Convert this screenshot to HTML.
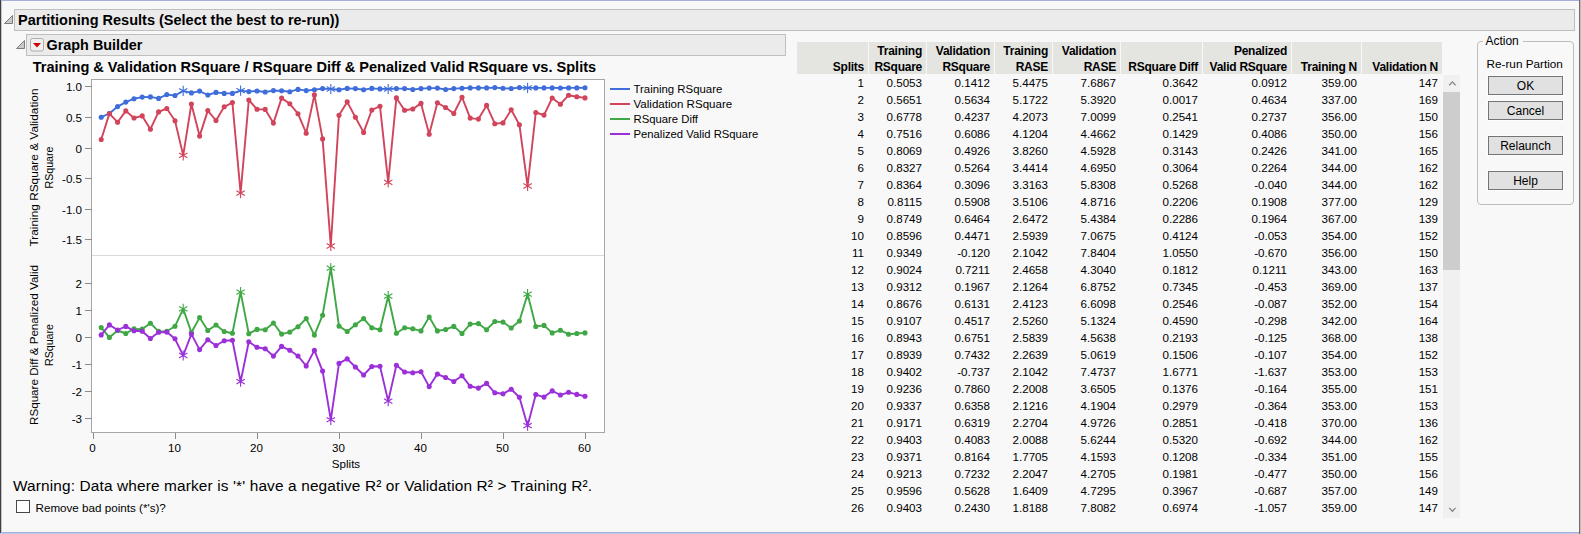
<!DOCTYPE html>
<html>
<head>
<meta charset="utf-8">
<title>Partitioning Results</title>
<style>
html,body{margin:0;padding:0;}
body{width:1581px;height:534px;overflow:hidden;position:relative;background:#f8f8f8;font-family:"Liberation Sans",sans-serif;color:#000;font-size:12px;}
.abs{position:absolute;}
.edge-top{left:0;top:0;width:1579px;height:1px;background:#a6afdb;}
.edge-left{left:0;top:0;width:1px;height:534px;background:#3c4046;}
.edge-left2{left:1px;top:0;width:1px;height:534px;background:#c6c6c6;}
.edge-right{left:1579px;top:0;width:1px;height:534px;background:#6c6c6c;}
.edge-right2{left:1580px;top:0;width:1px;height:534px;background:#bebebe;}
.edge-bottom{left:0;top:532px;width:1579px;height:1px;background:#a6aedb;}
.edge-bottom2{left:0;top:533px;width:1579px;height:1px;background:#c3c8e8;}
.hbox{position:absolute;background:#ebebeb;border:1px solid #bfbfbf;box-sizing:border-box;}
.htxt{position:absolute;font-weight:bold;white-space:nowrap;}
.tk{font-family:"Liberation Sans",sans-serif;font-size:11.6px;fill:#000;}
.th{position:absolute;top:42px;height:32px;background:#e4e4e0;box-sizing:border-box;font-weight:bold;font-size:12px;text-align:right;padding-right:4px;white-space:nowrap;}
.th span{display:block;height:16px;line-height:19px;letter-spacing:-0.25px;}
.td{position:absolute;height:17px;line-height:17px;text-align:right;box-sizing:border-box;padding-right:4px;font-size:11.6px;white-space:nowrap;}
.btn{position:absolute;left:1488px;width:75px;height:19px;box-sizing:border-box;background:#e1e1e1;border:1px solid #747474;box-shadow:0 0 0 1px #fdfdfd;text-align:center;line-height:19px;font-size:12px;}
</style>
</head>
<body>
<div class="abs edge-top"></div>
<div class="abs edge-bottom"></div>
<div class="abs edge-left"></div>
<div class="abs edge-left2"></div>
<div class="abs edge-bottom2"></div>
<div class="abs edge-right"></div>
<div class="abs edge-right2"></div>

<!-- outline header 1 -->
<div class="hbox" style="left:14px;top:9px;width:1561px;height:22px;"></div>
<svg class="abs" style="left:3px;top:13px" width="12" height="12" viewBox="0 0 12 12"><path d="M9.5 2.5V10.5H1.5Z" fill="#c8c8c8" stroke="#7c7c7c" stroke-width="1"/></svg>
<div class="htxt" id="t1" style="left:18px;top:12px;font-size:14.5px;line-height:17px;">Partitioning Results (Select the best to re-run))</div>

<!-- outline header 2 -->
<div class="hbox" style="left:26px;top:34px;width:760px;height:22px;"></div>
<svg class="abs" style="left:15px;top:38px" width="12" height="12" viewBox="0 0 12 12"><path d="M9.5 2.5V10.5H1.5Z" fill="#c8c8c8" stroke="#7c7c7c" stroke-width="1"/></svg>
<svg class="abs" style="left:30px;top:38px" width="14" height="14" viewBox="0 0 14 14"><rect x="0.5" y="0.5" width="13" height="12.5" rx="2" fill="#f0f0f0" stroke="#adadad"/><path d="M3 5H11L7 9.4Z" fill="#cc0000"/></svg>
<div class="htxt" id="t2" style="left:46.5px;top:37px;font-size:14.4px;line-height:17px;">Graph Builder</div>

<div class="htxt" id="t3" style="left:32.7px;top:58px;font-size:14.56px;line-height:18px;">Training &amp; Validation RSquare / RSquare Diff &amp; Penalized Valid RSquare vs. Splits</div>

<svg class="chart" width="800" height="480" viewBox="0 0 800 480" style="position:absolute;left:0;top:0">
<rect x="91.5" y="79.5" width="513" height="353" fill="#ffffff" stroke="#a6a6a6" stroke-width="1"/>
<line x1="92" y1="255.5" x2="604" y2="255.5" stroke="#d9d9d9" stroke-width="1"/>
<line x1="85" y1="86.5" x2="92" y2="86.5" stroke="#8c8c8c"/>
<text x="82" y="91.2" text-anchor="end" class="tk">1.0</text>
<line x1="85" y1="117.5" x2="92" y2="117.5" stroke="#8c8c8c"/>
<text x="82" y="122.2" text-anchor="end" class="tk">0.5</text>
<line x1="85" y1="148.5" x2="92" y2="148.5" stroke="#8c8c8c"/>
<text x="82" y="153.2" text-anchor="end" class="tk">0</text>
<line x1="85" y1="178.5" x2="92" y2="178.5" stroke="#8c8c8c"/>
<text x="82" y="183.2" text-anchor="end" class="tk">-0.5</text>
<line x1="85" y1="209.5" x2="92" y2="209.5" stroke="#8c8c8c"/>
<text x="82" y="214.2" text-anchor="end" class="tk">-1.0</text>
<line x1="85" y1="239.5" x2="92" y2="239.5" stroke="#8c8c8c"/>
<text x="82" y="244.2" text-anchor="end" class="tk">-1.5</text>
<line x1="85" y1="283.5" x2="92" y2="283.5" stroke="#8c8c8c"/>
<text x="82" y="288.2" text-anchor="end" class="tk">2</text>
<line x1="85" y1="310.5" x2="92" y2="310.5" stroke="#8c8c8c"/>
<text x="82" y="315.2" text-anchor="end" class="tk">1</text>
<line x1="85" y1="337.5" x2="92" y2="337.5" stroke="#8c8c8c"/>
<text x="82" y="342.2" text-anchor="end" class="tk">0</text>
<line x1="85" y1="364.5" x2="92" y2="364.5" stroke="#8c8c8c"/>
<text x="82" y="369.2" text-anchor="end" class="tk">-1</text>
<line x1="85" y1="391.5" x2="92" y2="391.5" stroke="#8c8c8c"/>
<text x="82" y="396.2" text-anchor="end" class="tk">-2</text>
<line x1="85" y1="418.5" x2="92" y2="418.5" stroke="#8c8c8c"/>
<text x="82" y="423.2" text-anchor="end" class="tk">-3</text>
<line x1="93.5" y1="433" x2="93.5" y2="439" stroke="#8c8c8c"/>
<text x="92.5" y="452" text-anchor="middle" class="tk">0</text>
<line x1="175.5" y1="433" x2="175.5" y2="439" stroke="#8c8c8c"/>
<text x="174.5" y="452" text-anchor="middle" class="tk">10</text>
<line x1="257.5" y1="433" x2="257.5" y2="439" stroke="#8c8c8c"/>
<text x="256.5" y="452" text-anchor="middle" class="tk">20</text>
<line x1="339.5" y1="433" x2="339.5" y2="439" stroke="#8c8c8c"/>
<text x="338.5" y="452" text-anchor="middle" class="tk">30</text>
<line x1="421.5" y1="433" x2="421.5" y2="439" stroke="#8c8c8c"/>
<text x="420.5" y="452" text-anchor="middle" class="tk">40</text>
<line x1="503.5" y1="433" x2="503.5" y2="439" stroke="#8c8c8c"/>
<text x="502.5" y="452" text-anchor="middle" class="tk">50</text>
<line x1="585.5" y1="433" x2="585.5" y2="439" stroke="#8c8c8c"/>
<text x="584.5" y="452" text-anchor="middle" class="tk">60</text>
<text x="346" y="468" text-anchor="middle" class="tk">Splits</text>
<text transform="translate(37.5,167.5) rotate(-90)" text-anchor="middle" class="tk" textLength="158" lengthAdjust="spacingAndGlyphs">Training RSquare &amp; Validation</text>
<text transform="translate(52.5,167.5) rotate(-90)" text-anchor="middle" class="tk" textLength="42" lengthAdjust="spacingAndGlyphs">RSquare</text>
<text transform="translate(37.5,345) rotate(-90)" text-anchor="middle" class="tk" textLength="160" lengthAdjust="spacingAndGlyphs">RSquare Diff &amp; Penalized Valid</text>
<text transform="translate(52.5,345) rotate(-90)" text-anchor="middle" class="tk" textLength="42" lengthAdjust="spacingAndGlyphs">RSquare</text>
<g>
<polyline points="101.2,117.2 109.4,113.5 117.6,106.6 125.8,102.1 134.0,98.7 142.2,97.1 150.4,96.9 158.6,98.4 166.8,94.6 175.0,95.5 183.2,90.9 191.4,92.9 199.6,91.1 207.8,95.0 216.0,92.4 224.2,93.4 232.4,93.4 240.6,90.6 248.8,91.6 257.0,91.0 265.2,92.0 273.4,90.6 281.6,90.7 289.8,91.7 298.0,89.4 306.2,90.6 314.4,89.7 322.6,88.6 330.8,89.0 339.0,89.7 347.2,88.4 355.4,88.6 363.6,89.7 371.8,88.4 380.0,88.9 388.2,89.0 396.4,88.6 404.6,88.6 412.8,89.5 421.0,88.6 429.2,88.1 437.4,88.1 445.6,89.5 453.8,88.6 462.0,88.2 470.2,87.9 478.4,87.9 486.6,87.9 494.8,87.6 503.0,88.2 511.2,88.5 519.4,87.6 527.6,87.9 535.8,87.9 544.0,87.9 552.2,87.9 560.4,88.0 568.6,87.9 576.8,87.9 585.0,87.8" fill="none" stroke="#3f6edb" stroke-width="1.9" stroke-linejoin="round"/>
<circle cx="101.2" cy="117.2" r="2.55" fill="#3f6edb"/>
<circle cx="109.4" cy="113.5" r="2.55" fill="#3f6edb"/>
<circle cx="117.6" cy="106.6" r="2.55" fill="#3f6edb"/>
<circle cx="125.8" cy="102.1" r="2.55" fill="#3f6edb"/>
<circle cx="134.0" cy="98.7" r="2.55" fill="#3f6edb"/>
<circle cx="142.2" cy="97.1" r="2.55" fill="#3f6edb"/>
<circle cx="150.4" cy="96.9" r="2.55" fill="#3f6edb"/>
<circle cx="158.6" cy="98.4" r="2.55" fill="#3f6edb"/>
<circle cx="166.8" cy="94.6" r="2.55" fill="#3f6edb"/>
<circle cx="175.0" cy="95.5" r="2.55" fill="#3f6edb"/>
<path d="M183.2 85.8V96.0M179.0 88.5L187.4 93.3M179.0 93.3L187.4 88.5" stroke="#3f6edb" stroke-width="1.1" fill="none"/>
<circle cx="191.4" cy="92.9" r="2.55" fill="#3f6edb"/>
<circle cx="199.6" cy="91.1" r="2.55" fill="#3f6edb"/>
<circle cx="207.8" cy="95.0" r="2.55" fill="#3f6edb"/>
<circle cx="216.0" cy="92.4" r="2.55" fill="#3f6edb"/>
<circle cx="224.2" cy="93.4" r="2.55" fill="#3f6edb"/>
<circle cx="232.4" cy="93.4" r="2.55" fill="#3f6edb"/>
<path d="M240.6 85.5V95.7M236.4 88.2L244.8 93.0M236.4 93.0L244.8 88.2" stroke="#3f6edb" stroke-width="1.1" fill="none"/>
<circle cx="248.8" cy="91.6" r="2.55" fill="#3f6edb"/>
<circle cx="257.0" cy="91.0" r="2.55" fill="#3f6edb"/>
<circle cx="265.2" cy="92.0" r="2.55" fill="#3f6edb"/>
<circle cx="273.4" cy="90.6" r="2.55" fill="#3f6edb"/>
<circle cx="281.6" cy="90.7" r="2.55" fill="#3f6edb"/>
<circle cx="289.8" cy="91.7" r="2.55" fill="#3f6edb"/>
<circle cx="298.0" cy="89.4" r="2.55" fill="#3f6edb"/>
<circle cx="306.2" cy="90.6" r="2.55" fill="#3f6edb"/>
<circle cx="314.4" cy="89.7" r="2.55" fill="#3f6edb"/>
<circle cx="322.6" cy="88.6" r="2.55" fill="#3f6edb"/>
<path d="M330.8 83.9V94.1M326.6 86.6L335.0 91.4M326.6 91.4L335.0 86.6" stroke="#3f6edb" stroke-width="1.1" fill="none"/>
<circle cx="339.0" cy="89.7" r="2.55" fill="#3f6edb"/>
<circle cx="347.2" cy="88.4" r="2.55" fill="#3f6edb"/>
<circle cx="355.4" cy="88.6" r="2.55" fill="#3f6edb"/>
<circle cx="363.6" cy="89.7" r="2.55" fill="#3f6edb"/>
<circle cx="371.8" cy="88.4" r="2.55" fill="#3f6edb"/>
<circle cx="380.0" cy="88.9" r="2.55" fill="#3f6edb"/>
<path d="M388.2 83.9V94.1M384.0 86.6L392.4 91.4M384.0 91.4L392.4 86.6" stroke="#3f6edb" stroke-width="1.1" fill="none"/>
<circle cx="396.4" cy="88.6" r="2.55" fill="#3f6edb"/>
<circle cx="404.6" cy="88.6" r="2.55" fill="#3f6edb"/>
<circle cx="412.8" cy="89.5" r="2.55" fill="#3f6edb"/>
<circle cx="421.0" cy="88.6" r="2.55" fill="#3f6edb"/>
<circle cx="429.2" cy="88.1" r="2.55" fill="#3f6edb"/>
<circle cx="437.4" cy="88.1" r="2.55" fill="#3f6edb"/>
<circle cx="445.6" cy="89.5" r="2.55" fill="#3f6edb"/>
<circle cx="453.8" cy="88.6" r="2.55" fill="#3f6edb"/>
<circle cx="462.0" cy="88.2" r="2.55" fill="#3f6edb"/>
<circle cx="470.2" cy="87.9" r="2.55" fill="#3f6edb"/>
<circle cx="478.4" cy="87.9" r="2.55" fill="#3f6edb"/>
<circle cx="486.6" cy="87.9" r="2.55" fill="#3f6edb"/>
<circle cx="494.8" cy="87.6" r="2.55" fill="#3f6edb"/>
<circle cx="503.0" cy="88.2" r="2.55" fill="#3f6edb"/>
<circle cx="511.2" cy="88.5" r="2.55" fill="#3f6edb"/>
<circle cx="519.4" cy="87.6" r="2.55" fill="#3f6edb"/>
<path d="M527.6 82.8V93.0M523.4 85.5L531.8 90.3M523.4 90.3L531.8 85.5" stroke="#3f6edb" stroke-width="1.1" fill="none"/>
<circle cx="535.8" cy="87.9" r="2.55" fill="#3f6edb"/>
<circle cx="544.0" cy="87.9" r="2.55" fill="#3f6edb"/>
<circle cx="552.2" cy="87.9" r="2.55" fill="#3f6edb"/>
<circle cx="560.4" cy="88.0" r="2.55" fill="#3f6edb"/>
<circle cx="568.6" cy="87.9" r="2.55" fill="#3f6edb"/>
<circle cx="576.8" cy="87.9" r="2.55" fill="#3f6edb"/>
<circle cx="585.0" cy="87.8" r="2.55" fill="#3f6edb"/>

<polyline points="101.2,139.5 109.4,113.6 117.6,122.2 125.8,110.9 134.0,118.0 142.2,115.9 150.4,129.2 158.6,111.9 166.8,108.5 175.0,120.7 183.2,155.4 191.4,104.0 199.6,136.1 207.8,110.6 216.0,120.5 224.2,106.8 232.4,102.6 240.6,193.2 248.8,100.0 257.0,109.2 265.2,109.4 273.4,123.1 281.6,98.1 289.8,103.8 298.0,113.7 306.2,133.2 314.4,94.9 322.6,138.9 330.8,246.0 339.0,115.2 347.2,101.9 355.4,117.2 363.6,132.4 371.8,110.0 380.0,106.2 388.2,182.4 396.4,97.9 404.6,110.3 412.8,109.0 421.0,103.4 429.2,134.2 437.4,102.8 445.6,107.5 453.8,113.5 462.0,97.2 470.2,118.1 478.4,119.1 486.6,105.4 494.8,123.7 503.0,122.9 511.2,109.8 519.4,124.7 527.6,186.0 535.8,112.5 544.0,115.1 552.2,98.0 560.4,104.2 568.6,95.2 576.8,96.7 585.0,97.9" fill="none" stroke="#d1445b" stroke-width="1.9" stroke-linejoin="round"/>
<circle cx="101.2" cy="139.5" r="2.55" fill="#d1445b"/>
<circle cx="109.4" cy="113.6" r="2.55" fill="#d1445b"/>
<circle cx="117.6" cy="122.2" r="2.55" fill="#d1445b"/>
<circle cx="125.8" cy="110.9" r="2.55" fill="#d1445b"/>
<circle cx="134.0" cy="118.0" r="2.55" fill="#d1445b"/>
<circle cx="142.2" cy="115.9" r="2.55" fill="#d1445b"/>
<circle cx="150.4" cy="129.2" r="2.55" fill="#d1445b"/>
<circle cx="158.6" cy="111.9" r="2.55" fill="#d1445b"/>
<circle cx="166.8" cy="108.5" r="2.55" fill="#d1445b"/>
<circle cx="175.0" cy="120.7" r="2.55" fill="#d1445b"/>
<path d="M183.2 150.3V160.5M179.0 153.0L187.4 157.8M179.0 157.8L187.4 153.0" stroke="#d1445b" stroke-width="1.1" fill="none"/>
<circle cx="191.4" cy="104.0" r="2.55" fill="#d1445b"/>
<circle cx="199.6" cy="136.1" r="2.55" fill="#d1445b"/>
<circle cx="207.8" cy="110.6" r="2.55" fill="#d1445b"/>
<circle cx="216.0" cy="120.5" r="2.55" fill="#d1445b"/>
<circle cx="224.2" cy="106.8" r="2.55" fill="#d1445b"/>
<circle cx="232.4" cy="102.6" r="2.55" fill="#d1445b"/>
<path d="M240.6 188.1V198.3M236.4 190.8L244.8 195.6M236.4 195.6L244.8 190.8" stroke="#d1445b" stroke-width="1.1" fill="none"/>
<circle cx="248.8" cy="100.0" r="2.55" fill="#d1445b"/>
<circle cx="257.0" cy="109.2" r="2.55" fill="#d1445b"/>
<circle cx="265.2" cy="109.4" r="2.55" fill="#d1445b"/>
<circle cx="273.4" cy="123.1" r="2.55" fill="#d1445b"/>
<circle cx="281.6" cy="98.1" r="2.55" fill="#d1445b"/>
<circle cx="289.8" cy="103.8" r="2.55" fill="#d1445b"/>
<circle cx="298.0" cy="113.7" r="2.55" fill="#d1445b"/>
<circle cx="306.2" cy="133.2" r="2.55" fill="#d1445b"/>
<circle cx="314.4" cy="94.9" r="2.55" fill="#d1445b"/>
<circle cx="322.6" cy="138.9" r="2.55" fill="#d1445b"/>
<path d="M330.8 240.9V251.1M326.6 243.6L335.0 248.4M326.6 248.4L335.0 243.6" stroke="#d1445b" stroke-width="1.1" fill="none"/>
<circle cx="339.0" cy="115.2" r="2.55" fill="#d1445b"/>
<circle cx="347.2" cy="101.9" r="2.55" fill="#d1445b"/>
<circle cx="355.4" cy="117.2" r="2.55" fill="#d1445b"/>
<circle cx="363.6" cy="132.4" r="2.55" fill="#d1445b"/>
<circle cx="371.8" cy="110.0" r="2.55" fill="#d1445b"/>
<circle cx="380.0" cy="106.2" r="2.55" fill="#d1445b"/>
<path d="M388.2 177.3V187.5M384.0 180.0L392.4 184.8M384.0 184.8L392.4 180.0" stroke="#d1445b" stroke-width="1.1" fill="none"/>
<circle cx="396.4" cy="97.9" r="2.55" fill="#d1445b"/>
<circle cx="404.6" cy="110.3" r="2.55" fill="#d1445b"/>
<circle cx="412.8" cy="109.0" r="2.55" fill="#d1445b"/>
<circle cx="421.0" cy="103.4" r="2.55" fill="#d1445b"/>
<circle cx="429.2" cy="134.2" r="2.55" fill="#d1445b"/>
<circle cx="437.4" cy="102.8" r="2.55" fill="#d1445b"/>
<circle cx="445.6" cy="107.5" r="2.55" fill="#d1445b"/>
<circle cx="453.8" cy="113.5" r="2.55" fill="#d1445b"/>
<circle cx="462.0" cy="97.2" r="2.55" fill="#d1445b"/>
<circle cx="470.2" cy="118.1" r="2.55" fill="#d1445b"/>
<circle cx="478.4" cy="119.1" r="2.55" fill="#d1445b"/>
<circle cx="486.6" cy="105.4" r="2.55" fill="#d1445b"/>
<circle cx="494.8" cy="123.7" r="2.55" fill="#d1445b"/>
<circle cx="503.0" cy="122.9" r="2.55" fill="#d1445b"/>
<circle cx="511.2" cy="109.8" r="2.55" fill="#d1445b"/>
<circle cx="519.4" cy="124.7" r="2.55" fill="#d1445b"/>
<path d="M527.6 180.9V191.1M523.4 183.6L531.8 188.4M523.4 188.4L531.8 183.6" stroke="#d1445b" stroke-width="1.1" fill="none"/>
<circle cx="535.8" cy="112.5" r="2.55" fill="#d1445b"/>
<circle cx="544.0" cy="115.1" r="2.55" fill="#d1445b"/>
<circle cx="552.2" cy="98.0" r="2.55" fill="#d1445b"/>
<circle cx="560.4" cy="104.2" r="2.55" fill="#d1445b"/>
<circle cx="568.6" cy="95.2" r="2.55" fill="#d1445b"/>
<circle cx="576.8" cy="96.7" r="2.55" fill="#d1445b"/>
<circle cx="585.0" cy="97.9" r="2.55" fill="#d1445b"/>

<polyline points="101.2,327.6 109.4,337.4 117.6,330.5 125.8,333.5 134.0,328.9 142.2,329.1 150.4,323.2 158.6,331.4 166.8,331.2 175.0,326.3 183.2,308.9 191.4,332.5 199.6,317.6 207.8,330.5 216.0,325.0 224.2,331.5 232.4,333.3 240.6,292.1 248.8,333.7 257.0,329.4 265.2,329.7 273.4,323.0 281.6,334.1 289.8,332.1 298.0,326.7 306.2,318.6 314.4,335.1 322.6,315.2 330.8,268.1 339.0,326.1 347.2,331.5 355.4,324.8 363.6,318.6 371.8,327.8 380.0,329.7 388.2,296.2 396.4,333.3 404.6,327.8 412.8,328.8 421.0,330.9 429.2,317.1 437.4,330.9 445.6,329.5 453.8,326.4 462.0,333.5 470.2,324.1 478.4,323.6 486.6,329.7 494.8,321.5 503.0,322.1 511.2,328.0 519.4,321.0 527.6,294.1 535.8,326.5 544.0,325.4 552.2,332.9 560.4,330.3 568.6,334.2 576.8,333.5 585.0,332.9" fill="none" stroke="#3fa845" stroke-width="1.9" stroke-linejoin="round"/>
<circle cx="101.2" cy="327.6" r="2.55" fill="#3fa845"/>
<circle cx="109.4" cy="337.4" r="2.55" fill="#3fa845"/>
<circle cx="117.6" cy="330.5" r="2.55" fill="#3fa845"/>
<circle cx="125.8" cy="333.5" r="2.55" fill="#3fa845"/>
<circle cx="134.0" cy="328.9" r="2.55" fill="#3fa845"/>
<circle cx="142.2" cy="329.1" r="2.55" fill="#3fa845"/>
<circle cx="150.4" cy="323.2" r="2.55" fill="#3fa845"/>
<circle cx="158.6" cy="331.4" r="2.55" fill="#3fa845"/>
<circle cx="166.8" cy="331.2" r="2.55" fill="#3fa845"/>
<circle cx="175.0" cy="326.3" r="2.55" fill="#3fa845"/>
<path d="M183.2 303.8V314.0M179.0 306.5L187.4 311.3M179.0 311.3L187.4 306.5" stroke="#3fa845" stroke-width="1.1" fill="none"/>
<circle cx="191.4" cy="332.5" r="2.55" fill="#3fa845"/>
<circle cx="199.6" cy="317.6" r="2.55" fill="#3fa845"/>
<circle cx="207.8" cy="330.5" r="2.55" fill="#3fa845"/>
<circle cx="216.0" cy="325.0" r="2.55" fill="#3fa845"/>
<circle cx="224.2" cy="331.5" r="2.55" fill="#3fa845"/>
<circle cx="232.4" cy="333.3" r="2.55" fill="#3fa845"/>
<path d="M240.6 287.0V297.2M236.4 289.7L244.8 294.5M236.4 294.5L244.8 289.7" stroke="#3fa845" stroke-width="1.1" fill="none"/>
<circle cx="248.8" cy="333.7" r="2.55" fill="#3fa845"/>
<circle cx="257.0" cy="329.4" r="2.55" fill="#3fa845"/>
<circle cx="265.2" cy="329.7" r="2.55" fill="#3fa845"/>
<circle cx="273.4" cy="323.0" r="2.55" fill="#3fa845"/>
<circle cx="281.6" cy="334.1" r="2.55" fill="#3fa845"/>
<circle cx="289.8" cy="332.1" r="2.55" fill="#3fa845"/>
<circle cx="298.0" cy="326.7" r="2.55" fill="#3fa845"/>
<circle cx="306.2" cy="318.6" r="2.55" fill="#3fa845"/>
<circle cx="314.4" cy="335.1" r="2.55" fill="#3fa845"/>
<circle cx="322.6" cy="315.2" r="2.55" fill="#3fa845"/>
<path d="M330.8 263.0V273.2M326.6 265.7L335.0 270.5M326.6 270.5L335.0 265.7" stroke="#3fa845" stroke-width="1.1" fill="none"/>
<circle cx="339.0" cy="326.1" r="2.55" fill="#3fa845"/>
<circle cx="347.2" cy="331.5" r="2.55" fill="#3fa845"/>
<circle cx="355.4" cy="324.8" r="2.55" fill="#3fa845"/>
<circle cx="363.6" cy="318.6" r="2.55" fill="#3fa845"/>
<circle cx="371.8" cy="327.8" r="2.55" fill="#3fa845"/>
<circle cx="380.0" cy="329.7" r="2.55" fill="#3fa845"/>
<path d="M388.2 291.1V301.3M384.0 293.8L392.4 298.6M384.0 298.6L392.4 293.8" stroke="#3fa845" stroke-width="1.1" fill="none"/>
<circle cx="396.4" cy="333.3" r="2.55" fill="#3fa845"/>
<circle cx="404.6" cy="327.8" r="2.55" fill="#3fa845"/>
<circle cx="412.8" cy="328.8" r="2.55" fill="#3fa845"/>
<circle cx="421.0" cy="330.9" r="2.55" fill="#3fa845"/>
<circle cx="429.2" cy="317.1" r="2.55" fill="#3fa845"/>
<circle cx="437.4" cy="330.9" r="2.55" fill="#3fa845"/>
<circle cx="445.6" cy="329.5" r="2.55" fill="#3fa845"/>
<circle cx="453.8" cy="326.4" r="2.55" fill="#3fa845"/>
<circle cx="462.0" cy="333.5" r="2.55" fill="#3fa845"/>
<circle cx="470.2" cy="324.1" r="2.55" fill="#3fa845"/>
<circle cx="478.4" cy="323.6" r="2.55" fill="#3fa845"/>
<circle cx="486.6" cy="329.7" r="2.55" fill="#3fa845"/>
<circle cx="494.8" cy="321.5" r="2.55" fill="#3fa845"/>
<circle cx="503.0" cy="322.1" r="2.55" fill="#3fa845"/>
<circle cx="511.2" cy="328.0" r="2.55" fill="#3fa845"/>
<circle cx="519.4" cy="321.0" r="2.55" fill="#3fa845"/>
<path d="M527.6 289.0V299.2M523.4 291.7L531.8 296.5M523.4 296.5L531.8 291.7" stroke="#3fa845" stroke-width="1.1" fill="none"/>
<circle cx="535.8" cy="326.5" r="2.55" fill="#3fa845"/>
<circle cx="544.0" cy="325.4" r="2.55" fill="#3fa845"/>
<circle cx="552.2" cy="332.9" r="2.55" fill="#3fa845"/>
<circle cx="560.4" cy="330.3" r="2.55" fill="#3fa845"/>
<circle cx="568.6" cy="334.2" r="2.55" fill="#3fa845"/>
<circle cx="576.8" cy="333.5" r="2.55" fill="#3fa845"/>
<circle cx="585.0" cy="332.9" r="2.55" fill="#3fa845"/>

<polyline points="101.2,334.9 109.4,324.9 117.6,330.0 125.8,326.4 134.0,330.8 142.2,331.3 150.4,338.5 158.6,332.2 166.8,332.1 175.0,338.8 183.2,355.5 191.4,334.1 199.6,349.6 207.8,339.7 216.0,345.5 224.2,340.8 232.4,340.3 240.6,381.6 248.8,341.8 257.0,347.2 265.2,348.7 273.4,356.1 281.6,346.4 289.8,350.3 298.0,356.0 306.2,365.9 314.4,350.4 322.6,371.1 330.8,419.8 339.0,363.4 347.2,358.9 355.4,367.0 363.6,375.0 371.8,366.5 380.0,366.2 388.2,401.1 396.4,365.2 404.6,372.0 412.8,372.8 421.0,371.7 429.2,386.6 437.4,374.1 445.6,377.5 453.8,381.5 462.0,375.7 470.2,386.3 478.4,388.1 486.6,383.4 494.8,392.8 503.0,393.8 511.2,389.3 519.4,397.3 527.6,425.7 535.8,394.6 544.0,397.1 552.2,390.9 560.4,395.0 568.6,392.3 576.8,394.4 585.0,396.2" fill="none" stroke="#9b30d9" stroke-width="1.9" stroke-linejoin="round"/>
<circle cx="101.2" cy="334.9" r="2.55" fill="#9b30d9"/>
<circle cx="109.4" cy="324.9" r="2.55" fill="#9b30d9"/>
<circle cx="117.6" cy="330.0" r="2.55" fill="#9b30d9"/>
<circle cx="125.8" cy="326.4" r="2.55" fill="#9b30d9"/>
<circle cx="134.0" cy="330.8" r="2.55" fill="#9b30d9"/>
<circle cx="142.2" cy="331.3" r="2.55" fill="#9b30d9"/>
<circle cx="150.4" cy="338.5" r="2.55" fill="#9b30d9"/>
<circle cx="158.6" cy="332.2" r="2.55" fill="#9b30d9"/>
<circle cx="166.8" cy="332.1" r="2.55" fill="#9b30d9"/>
<circle cx="175.0" cy="338.8" r="2.55" fill="#9b30d9"/>
<path d="M183.2 350.4V360.6M179.0 353.1L187.4 357.9M179.0 357.9L187.4 353.1" stroke="#9b30d9" stroke-width="1.1" fill="none"/>
<circle cx="191.4" cy="334.1" r="2.55" fill="#9b30d9"/>
<circle cx="199.6" cy="349.6" r="2.55" fill="#9b30d9"/>
<circle cx="207.8" cy="339.7" r="2.55" fill="#9b30d9"/>
<circle cx="216.0" cy="345.5" r="2.55" fill="#9b30d9"/>
<circle cx="224.2" cy="340.8" r="2.55" fill="#9b30d9"/>
<circle cx="232.4" cy="340.3" r="2.55" fill="#9b30d9"/>
<path d="M240.6 376.5V386.7M236.4 379.2L244.8 384.0M236.4 384.0L244.8 379.2" stroke="#9b30d9" stroke-width="1.1" fill="none"/>
<circle cx="248.8" cy="341.8" r="2.55" fill="#9b30d9"/>
<circle cx="257.0" cy="347.2" r="2.55" fill="#9b30d9"/>
<circle cx="265.2" cy="348.7" r="2.55" fill="#9b30d9"/>
<circle cx="273.4" cy="356.1" r="2.55" fill="#9b30d9"/>
<circle cx="281.6" cy="346.4" r="2.55" fill="#9b30d9"/>
<circle cx="289.8" cy="350.3" r="2.55" fill="#9b30d9"/>
<circle cx="298.0" cy="356.0" r="2.55" fill="#9b30d9"/>
<circle cx="306.2" cy="365.9" r="2.55" fill="#9b30d9"/>
<circle cx="314.4" cy="350.4" r="2.55" fill="#9b30d9"/>
<circle cx="322.6" cy="371.1" r="2.55" fill="#9b30d9"/>
<path d="M330.8 414.6V424.9M326.6 417.4L335.0 422.1M326.6 422.1L335.0 417.4" stroke="#9b30d9" stroke-width="1.1" fill="none"/>
<circle cx="339.0" cy="363.4" r="2.55" fill="#9b30d9"/>
<circle cx="347.2" cy="358.9" r="2.55" fill="#9b30d9"/>
<circle cx="355.4" cy="367.0" r="2.55" fill="#9b30d9"/>
<circle cx="363.6" cy="375.0" r="2.55" fill="#9b30d9"/>
<circle cx="371.8" cy="366.5" r="2.55" fill="#9b30d9"/>
<circle cx="380.0" cy="366.2" r="2.55" fill="#9b30d9"/>
<path d="M388.2 396.0V406.2M384.0 398.7L392.4 403.5M384.0 403.5L392.4 398.7" stroke="#9b30d9" stroke-width="1.1" fill="none"/>
<circle cx="396.4" cy="365.2" r="2.55" fill="#9b30d9"/>
<circle cx="404.6" cy="372.0" r="2.55" fill="#9b30d9"/>
<circle cx="412.8" cy="372.8" r="2.55" fill="#9b30d9"/>
<circle cx="421.0" cy="371.7" r="2.55" fill="#9b30d9"/>
<circle cx="429.2" cy="386.6" r="2.55" fill="#9b30d9"/>
<circle cx="437.4" cy="374.1" r="2.55" fill="#9b30d9"/>
<circle cx="445.6" cy="377.5" r="2.55" fill="#9b30d9"/>
<circle cx="453.8" cy="381.5" r="2.55" fill="#9b30d9"/>
<circle cx="462.0" cy="375.7" r="2.55" fill="#9b30d9"/>
<circle cx="470.2" cy="386.3" r="2.55" fill="#9b30d9"/>
<circle cx="478.4" cy="388.1" r="2.55" fill="#9b30d9"/>
<circle cx="486.6" cy="383.4" r="2.55" fill="#9b30d9"/>
<circle cx="494.8" cy="392.8" r="2.55" fill="#9b30d9"/>
<circle cx="503.0" cy="393.8" r="2.55" fill="#9b30d9"/>
<circle cx="511.2" cy="389.3" r="2.55" fill="#9b30d9"/>
<circle cx="519.4" cy="397.3" r="2.55" fill="#9b30d9"/>
<path d="M527.6 420.6V430.8M523.4 423.3L531.8 428.1M523.4 428.1L531.8 423.3" stroke="#9b30d9" stroke-width="1.1" fill="none"/>
<circle cx="535.8" cy="394.6" r="2.55" fill="#9b30d9"/>
<circle cx="544.0" cy="397.1" r="2.55" fill="#9b30d9"/>
<circle cx="552.2" cy="390.9" r="2.55" fill="#9b30d9"/>
<circle cx="560.4" cy="395.0" r="2.55" fill="#9b30d9"/>
<circle cx="568.6" cy="392.3" r="2.55" fill="#9b30d9"/>
<circle cx="576.8" cy="394.4" r="2.55" fill="#9b30d9"/>
<circle cx="585.0" cy="396.2" r="2.55" fill="#9b30d9"/>

</g>
<line x1="610" y1="89.0" x2="630" y2="89.0" stroke="#3f6edb" stroke-width="2"/>
<text x="633.5" y="93.3" class="tk" textLength="88.8" lengthAdjust="spacingAndGlyphs">Training RSquare</text>
<line x1="610" y1="104.0" x2="630" y2="104.0" stroke="#d1445b" stroke-width="2"/>
<text x="633.5" y="108.3" class="tk" textLength="98.7" lengthAdjust="spacingAndGlyphs">Validation RSquare</text>
<line x1="610" y1="119.0" x2="630" y2="119.0" stroke="#3fa845" stroke-width="2"/>
<text x="633.5" y="123.3" class="tk" textLength="64.5" lengthAdjust="spacingAndGlyphs">RSquare Diff</text>
<line x1="610" y1="134.0" x2="630" y2="134.0" stroke="#9b30d9" stroke-width="2"/>
<text x="633.5" y="138.3" class="tk" textLength="124.7" lengthAdjust="spacingAndGlyphs">Penalized Valid RSquare</text>
</svg>

<div class="abs" id="t4" style="left:13px;top:476px;font-size:15.4px;line-height:20px;white-space:nowrap;letter-spacing:0.14px;">Warning: Data where marker is '*' have a negative R² or Validation R² &gt; Training R².</div>
<div class="abs" style="left:16px;top:500px;width:14px;height:13px;box-sizing:border-box;border:1px solid #484848;background:#fff;"></div>
<div class="abs" id="t5" style="left:35.5px;top:500px;font-size:11.65px;line-height:15px;white-space:nowrap;">Remove bad points (*'s)?</div>

<div class="th" style="left:797.0px;width:71.0px"><span>&nbsp;</span><span>Splits</span></div>
<div class="th" style="left:869.0px;width:57.0px"><span>Training</span><span>RSquare</span></div>
<div class="th" style="left:927.0px;width:67.0px"><span>Validation</span><span>RSquare</span></div>
<div class="th" style="left:995.0px;width:57.0px"><span>Training</span><span>RASE</span></div>
<div class="th" style="left:1053.0px;width:67.0px"><span>Validation</span><span>RASE</span></div>
<div class="th" style="left:1121.0px;width:81.0px"><span>&nbsp;</span><span>RSquare Diff</span></div>
<div class="th" style="left:1203.0px;width:88.0px"><span>Penalized</span><span>Valid RSquare</span></div>
<div class="th" style="left:1292.0px;width:69.0px"><span>&nbsp;</span><span>Training N</span></div>
<div class="th" style="left:1362.0px;width:80.0px"><span>&nbsp;</span><span>Validation N</span></div>
<div class="td" style="left:797.0px;top:74.4px;width:71.0px">1</div>
<div class="td" style="left:869.0px;top:74.4px;width:57.0px">0.5053</div>
<div class="td" style="left:927.0px;top:74.4px;width:67.0px">0.1412</div>
<div class="td" style="left:995.0px;top:74.4px;width:57.0px">5.4475</div>
<div class="td" style="left:1053.0px;top:74.4px;width:67.0px">7.6867</div>
<div class="td" style="left:1121.0px;top:74.4px;width:81.0px">0.3642</div>
<div class="td" style="left:1203.0px;top:74.4px;width:88.0px">0.0912</div>
<div class="td" style="left:1292.0px;top:74.4px;width:69.0px">359.00</div>
<div class="td" style="left:1362.0px;top:74.4px;width:80.0px">147</div>
<div class="td" style="left:797.0px;top:91.4px;width:71.0px">2</div>
<div class="td" style="left:869.0px;top:91.4px;width:57.0px">0.5651</div>
<div class="td" style="left:927.0px;top:91.4px;width:67.0px">0.5634</div>
<div class="td" style="left:995.0px;top:91.4px;width:57.0px">5.1722</div>
<div class="td" style="left:1053.0px;top:91.4px;width:67.0px">5.3920</div>
<div class="td" style="left:1121.0px;top:91.4px;width:81.0px">0.0017</div>
<div class="td" style="left:1203.0px;top:91.4px;width:88.0px">0.4634</div>
<div class="td" style="left:1292.0px;top:91.4px;width:69.0px">337.00</div>
<div class="td" style="left:1362.0px;top:91.4px;width:80.0px">169</div>
<div class="td" style="left:797.0px;top:108.4px;width:71.0px">3</div>
<div class="td" style="left:869.0px;top:108.4px;width:57.0px">0.6778</div>
<div class="td" style="left:927.0px;top:108.4px;width:67.0px">0.4237</div>
<div class="td" style="left:995.0px;top:108.4px;width:57.0px">4.2073</div>
<div class="td" style="left:1053.0px;top:108.4px;width:67.0px">7.0099</div>
<div class="td" style="left:1121.0px;top:108.4px;width:81.0px">0.2541</div>
<div class="td" style="left:1203.0px;top:108.4px;width:88.0px">0.2737</div>
<div class="td" style="left:1292.0px;top:108.4px;width:69.0px">356.00</div>
<div class="td" style="left:1362.0px;top:108.4px;width:80.0px">150</div>
<div class="td" style="left:797.0px;top:125.4px;width:71.0px">4</div>
<div class="td" style="left:869.0px;top:125.4px;width:57.0px">0.7516</div>
<div class="td" style="left:927.0px;top:125.4px;width:67.0px">0.6086</div>
<div class="td" style="left:995.0px;top:125.4px;width:57.0px">4.1204</div>
<div class="td" style="left:1053.0px;top:125.4px;width:67.0px">4.4662</div>
<div class="td" style="left:1121.0px;top:125.4px;width:81.0px">0.1429</div>
<div class="td" style="left:1203.0px;top:125.4px;width:88.0px">0.4086</div>
<div class="td" style="left:1292.0px;top:125.4px;width:69.0px">350.00</div>
<div class="td" style="left:1362.0px;top:125.4px;width:80.0px">156</div>
<div class="td" style="left:797.0px;top:142.4px;width:71.0px">5</div>
<div class="td" style="left:869.0px;top:142.4px;width:57.0px">0.8069</div>
<div class="td" style="left:927.0px;top:142.4px;width:67.0px">0.4926</div>
<div class="td" style="left:995.0px;top:142.4px;width:57.0px">3.8260</div>
<div class="td" style="left:1053.0px;top:142.4px;width:67.0px">4.5928</div>
<div class="td" style="left:1121.0px;top:142.4px;width:81.0px">0.3143</div>
<div class="td" style="left:1203.0px;top:142.4px;width:88.0px">0.2426</div>
<div class="td" style="left:1292.0px;top:142.4px;width:69.0px">341.00</div>
<div class="td" style="left:1362.0px;top:142.4px;width:80.0px">165</div>
<div class="td" style="left:797.0px;top:159.4px;width:71.0px">6</div>
<div class="td" style="left:869.0px;top:159.4px;width:57.0px">0.8327</div>
<div class="td" style="left:927.0px;top:159.4px;width:67.0px">0.5264</div>
<div class="td" style="left:995.0px;top:159.4px;width:57.0px">3.4414</div>
<div class="td" style="left:1053.0px;top:159.4px;width:67.0px">4.6950</div>
<div class="td" style="left:1121.0px;top:159.4px;width:81.0px">0.3064</div>
<div class="td" style="left:1203.0px;top:159.4px;width:88.0px">0.2264</div>
<div class="td" style="left:1292.0px;top:159.4px;width:69.0px">344.00</div>
<div class="td" style="left:1362.0px;top:159.4px;width:80.0px">162</div>
<div class="td" style="left:797.0px;top:176.4px;width:71.0px">7</div>
<div class="td" style="left:869.0px;top:176.4px;width:57.0px">0.8364</div>
<div class="td" style="left:927.0px;top:176.4px;width:67.0px">0.3096</div>
<div class="td" style="left:995.0px;top:176.4px;width:57.0px">3.3163</div>
<div class="td" style="left:1053.0px;top:176.4px;width:67.0px">5.8308</div>
<div class="td" style="left:1121.0px;top:176.4px;width:81.0px">0.5268</div>
<div class="td" style="left:1203.0px;top:176.4px;width:88.0px">-0.040</div>
<div class="td" style="left:1292.0px;top:176.4px;width:69.0px">344.00</div>
<div class="td" style="left:1362.0px;top:176.4px;width:80.0px">162</div>
<div class="td" style="left:797.0px;top:193.4px;width:71.0px">8</div>
<div class="td" style="left:869.0px;top:193.4px;width:57.0px">0.8115</div>
<div class="td" style="left:927.0px;top:193.4px;width:67.0px">0.5908</div>
<div class="td" style="left:995.0px;top:193.4px;width:57.0px">3.5106</div>
<div class="td" style="left:1053.0px;top:193.4px;width:67.0px">4.8716</div>
<div class="td" style="left:1121.0px;top:193.4px;width:81.0px">0.2206</div>
<div class="td" style="left:1203.0px;top:193.4px;width:88.0px">0.1908</div>
<div class="td" style="left:1292.0px;top:193.4px;width:69.0px">377.00</div>
<div class="td" style="left:1362.0px;top:193.4px;width:80.0px">129</div>
<div class="td" style="left:797.0px;top:210.4px;width:71.0px">9</div>
<div class="td" style="left:869.0px;top:210.4px;width:57.0px">0.8749</div>
<div class="td" style="left:927.0px;top:210.4px;width:67.0px">0.6464</div>
<div class="td" style="left:995.0px;top:210.4px;width:57.0px">2.6472</div>
<div class="td" style="left:1053.0px;top:210.4px;width:67.0px">5.4384</div>
<div class="td" style="left:1121.0px;top:210.4px;width:81.0px">0.2286</div>
<div class="td" style="left:1203.0px;top:210.4px;width:88.0px">0.1964</div>
<div class="td" style="left:1292.0px;top:210.4px;width:69.0px">367.00</div>
<div class="td" style="left:1362.0px;top:210.4px;width:80.0px">139</div>
<div class="td" style="left:797.0px;top:227.4px;width:71.0px">10</div>
<div class="td" style="left:869.0px;top:227.4px;width:57.0px">0.8596</div>
<div class="td" style="left:927.0px;top:227.4px;width:67.0px">0.4471</div>
<div class="td" style="left:995.0px;top:227.4px;width:57.0px">2.5939</div>
<div class="td" style="left:1053.0px;top:227.4px;width:67.0px">7.0675</div>
<div class="td" style="left:1121.0px;top:227.4px;width:81.0px">0.4124</div>
<div class="td" style="left:1203.0px;top:227.4px;width:88.0px">-0.053</div>
<div class="td" style="left:1292.0px;top:227.4px;width:69.0px">354.00</div>
<div class="td" style="left:1362.0px;top:227.4px;width:80.0px">152</div>
<div class="td" style="left:797.0px;top:244.4px;width:71.0px">11</div>
<div class="td" style="left:869.0px;top:244.4px;width:57.0px">0.9349</div>
<div class="td" style="left:927.0px;top:244.4px;width:67.0px">-0.120</div>
<div class="td" style="left:995.0px;top:244.4px;width:57.0px">2.1042</div>
<div class="td" style="left:1053.0px;top:244.4px;width:67.0px">7.8404</div>
<div class="td" style="left:1121.0px;top:244.4px;width:81.0px">1.0550</div>
<div class="td" style="left:1203.0px;top:244.4px;width:88.0px">-0.670</div>
<div class="td" style="left:1292.0px;top:244.4px;width:69.0px">356.00</div>
<div class="td" style="left:1362.0px;top:244.4px;width:80.0px">150</div>
<div class="td" style="left:797.0px;top:261.4px;width:71.0px">12</div>
<div class="td" style="left:869.0px;top:261.4px;width:57.0px">0.9024</div>
<div class="td" style="left:927.0px;top:261.4px;width:67.0px">0.7211</div>
<div class="td" style="left:995.0px;top:261.4px;width:57.0px">2.4658</div>
<div class="td" style="left:1053.0px;top:261.4px;width:67.0px">4.3040</div>
<div class="td" style="left:1121.0px;top:261.4px;width:81.0px">0.1812</div>
<div class="td" style="left:1203.0px;top:261.4px;width:88.0px">0.1211</div>
<div class="td" style="left:1292.0px;top:261.4px;width:69.0px">343.00</div>
<div class="td" style="left:1362.0px;top:261.4px;width:80.0px">163</div>
<div class="td" style="left:797.0px;top:278.4px;width:71.0px">13</div>
<div class="td" style="left:869.0px;top:278.4px;width:57.0px">0.9312</div>
<div class="td" style="left:927.0px;top:278.4px;width:67.0px">0.1967</div>
<div class="td" style="left:995.0px;top:278.4px;width:57.0px">2.1264</div>
<div class="td" style="left:1053.0px;top:278.4px;width:67.0px">6.8752</div>
<div class="td" style="left:1121.0px;top:278.4px;width:81.0px">0.7345</div>
<div class="td" style="left:1203.0px;top:278.4px;width:88.0px">-0.453</div>
<div class="td" style="left:1292.0px;top:278.4px;width:69.0px">369.00</div>
<div class="td" style="left:1362.0px;top:278.4px;width:80.0px">137</div>
<div class="td" style="left:797.0px;top:295.4px;width:71.0px">14</div>
<div class="td" style="left:869.0px;top:295.4px;width:57.0px">0.8676</div>
<div class="td" style="left:927.0px;top:295.4px;width:67.0px">0.6131</div>
<div class="td" style="left:995.0px;top:295.4px;width:57.0px">2.4123</div>
<div class="td" style="left:1053.0px;top:295.4px;width:67.0px">6.6098</div>
<div class="td" style="left:1121.0px;top:295.4px;width:81.0px">0.2546</div>
<div class="td" style="left:1203.0px;top:295.4px;width:88.0px">-0.087</div>
<div class="td" style="left:1292.0px;top:295.4px;width:69.0px">352.00</div>
<div class="td" style="left:1362.0px;top:295.4px;width:80.0px">154</div>
<div class="td" style="left:797.0px;top:312.4px;width:71.0px">15</div>
<div class="td" style="left:869.0px;top:312.4px;width:57.0px">0.9107</div>
<div class="td" style="left:927.0px;top:312.4px;width:67.0px">0.4517</div>
<div class="td" style="left:995.0px;top:312.4px;width:57.0px">2.5260</div>
<div class="td" style="left:1053.0px;top:312.4px;width:67.0px">5.1324</div>
<div class="td" style="left:1121.0px;top:312.4px;width:81.0px">0.4590</div>
<div class="td" style="left:1203.0px;top:312.4px;width:88.0px">-0.298</div>
<div class="td" style="left:1292.0px;top:312.4px;width:69.0px">342.00</div>
<div class="td" style="left:1362.0px;top:312.4px;width:80.0px">164</div>
<div class="td" style="left:797.0px;top:329.4px;width:71.0px">16</div>
<div class="td" style="left:869.0px;top:329.4px;width:57.0px">0.8943</div>
<div class="td" style="left:927.0px;top:329.4px;width:67.0px">0.6751</div>
<div class="td" style="left:995.0px;top:329.4px;width:57.0px">2.5839</div>
<div class="td" style="left:1053.0px;top:329.4px;width:67.0px">4.5638</div>
<div class="td" style="left:1121.0px;top:329.4px;width:81.0px">0.2193</div>
<div class="td" style="left:1203.0px;top:329.4px;width:88.0px">-0.125</div>
<div class="td" style="left:1292.0px;top:329.4px;width:69.0px">368.00</div>
<div class="td" style="left:1362.0px;top:329.4px;width:80.0px">138</div>
<div class="td" style="left:797.0px;top:346.4px;width:71.0px">17</div>
<div class="td" style="left:869.0px;top:346.4px;width:57.0px">0.8939</div>
<div class="td" style="left:927.0px;top:346.4px;width:67.0px">0.7432</div>
<div class="td" style="left:995.0px;top:346.4px;width:57.0px">2.2639</div>
<div class="td" style="left:1053.0px;top:346.4px;width:67.0px">5.0619</div>
<div class="td" style="left:1121.0px;top:346.4px;width:81.0px">0.1506</div>
<div class="td" style="left:1203.0px;top:346.4px;width:88.0px">-0.107</div>
<div class="td" style="left:1292.0px;top:346.4px;width:69.0px">354.00</div>
<div class="td" style="left:1362.0px;top:346.4px;width:80.0px">152</div>
<div class="td" style="left:797.0px;top:363.4px;width:71.0px">18</div>
<div class="td" style="left:869.0px;top:363.4px;width:57.0px">0.9402</div>
<div class="td" style="left:927.0px;top:363.4px;width:67.0px">-0.737</div>
<div class="td" style="left:995.0px;top:363.4px;width:57.0px">2.1042</div>
<div class="td" style="left:1053.0px;top:363.4px;width:67.0px">7.4737</div>
<div class="td" style="left:1121.0px;top:363.4px;width:81.0px">1.6771</div>
<div class="td" style="left:1203.0px;top:363.4px;width:88.0px">-1.637</div>
<div class="td" style="left:1292.0px;top:363.4px;width:69.0px">353.00</div>
<div class="td" style="left:1362.0px;top:363.4px;width:80.0px">153</div>
<div class="td" style="left:797.0px;top:380.4px;width:71.0px">19</div>
<div class="td" style="left:869.0px;top:380.4px;width:57.0px">0.9236</div>
<div class="td" style="left:927.0px;top:380.4px;width:67.0px">0.7860</div>
<div class="td" style="left:995.0px;top:380.4px;width:57.0px">2.2008</div>
<div class="td" style="left:1053.0px;top:380.4px;width:67.0px">3.6505</div>
<div class="td" style="left:1121.0px;top:380.4px;width:81.0px">0.1376</div>
<div class="td" style="left:1203.0px;top:380.4px;width:88.0px">-0.164</div>
<div class="td" style="left:1292.0px;top:380.4px;width:69.0px">355.00</div>
<div class="td" style="left:1362.0px;top:380.4px;width:80.0px">151</div>
<div class="td" style="left:797.0px;top:397.4px;width:71.0px">20</div>
<div class="td" style="left:869.0px;top:397.4px;width:57.0px">0.9337</div>
<div class="td" style="left:927.0px;top:397.4px;width:67.0px">0.6358</div>
<div class="td" style="left:995.0px;top:397.4px;width:57.0px">2.1216</div>
<div class="td" style="left:1053.0px;top:397.4px;width:67.0px">4.1904</div>
<div class="td" style="left:1121.0px;top:397.4px;width:81.0px">0.2979</div>
<div class="td" style="left:1203.0px;top:397.4px;width:88.0px">-0.364</div>
<div class="td" style="left:1292.0px;top:397.4px;width:69.0px">353.00</div>
<div class="td" style="left:1362.0px;top:397.4px;width:80.0px">153</div>
<div class="td" style="left:797.0px;top:414.4px;width:71.0px">21</div>
<div class="td" style="left:869.0px;top:414.4px;width:57.0px">0.9171</div>
<div class="td" style="left:927.0px;top:414.4px;width:67.0px">0.6319</div>
<div class="td" style="left:995.0px;top:414.4px;width:57.0px">2.2704</div>
<div class="td" style="left:1053.0px;top:414.4px;width:67.0px">4.9726</div>
<div class="td" style="left:1121.0px;top:414.4px;width:81.0px">0.2851</div>
<div class="td" style="left:1203.0px;top:414.4px;width:88.0px">-0.418</div>
<div class="td" style="left:1292.0px;top:414.4px;width:69.0px">370.00</div>
<div class="td" style="left:1362.0px;top:414.4px;width:80.0px">136</div>
<div class="td" style="left:797.0px;top:431.4px;width:71.0px">22</div>
<div class="td" style="left:869.0px;top:431.4px;width:57.0px">0.9403</div>
<div class="td" style="left:927.0px;top:431.4px;width:67.0px">0.4083</div>
<div class="td" style="left:995.0px;top:431.4px;width:57.0px">2.0088</div>
<div class="td" style="left:1053.0px;top:431.4px;width:67.0px">5.6244</div>
<div class="td" style="left:1121.0px;top:431.4px;width:81.0px">0.5320</div>
<div class="td" style="left:1203.0px;top:431.4px;width:88.0px">-0.692</div>
<div class="td" style="left:1292.0px;top:431.4px;width:69.0px">344.00</div>
<div class="td" style="left:1362.0px;top:431.4px;width:80.0px">162</div>
<div class="td" style="left:797.0px;top:448.4px;width:71.0px">23</div>
<div class="td" style="left:869.0px;top:448.4px;width:57.0px">0.9371</div>
<div class="td" style="left:927.0px;top:448.4px;width:67.0px">0.8164</div>
<div class="td" style="left:995.0px;top:448.4px;width:57.0px">1.7705</div>
<div class="td" style="left:1053.0px;top:448.4px;width:67.0px">4.1593</div>
<div class="td" style="left:1121.0px;top:448.4px;width:81.0px">0.1208</div>
<div class="td" style="left:1203.0px;top:448.4px;width:88.0px">-0.334</div>
<div class="td" style="left:1292.0px;top:448.4px;width:69.0px">351.00</div>
<div class="td" style="left:1362.0px;top:448.4px;width:80.0px">155</div>
<div class="td" style="left:797.0px;top:465.4px;width:71.0px">24</div>
<div class="td" style="left:869.0px;top:465.4px;width:57.0px">0.9213</div>
<div class="td" style="left:927.0px;top:465.4px;width:67.0px">0.7232</div>
<div class="td" style="left:995.0px;top:465.4px;width:57.0px">2.2047</div>
<div class="td" style="left:1053.0px;top:465.4px;width:67.0px">4.2705</div>
<div class="td" style="left:1121.0px;top:465.4px;width:81.0px">0.1981</div>
<div class="td" style="left:1203.0px;top:465.4px;width:88.0px">-0.477</div>
<div class="td" style="left:1292.0px;top:465.4px;width:69.0px">350.00</div>
<div class="td" style="left:1362.0px;top:465.4px;width:80.0px">156</div>
<div class="td" style="left:797.0px;top:482.4px;width:71.0px">25</div>
<div class="td" style="left:869.0px;top:482.4px;width:57.0px">0.9596</div>
<div class="td" style="left:927.0px;top:482.4px;width:67.0px">0.5628</div>
<div class="td" style="left:995.0px;top:482.4px;width:57.0px">1.6409</div>
<div class="td" style="left:1053.0px;top:482.4px;width:67.0px">4.7295</div>
<div class="td" style="left:1121.0px;top:482.4px;width:81.0px">0.3967</div>
<div class="td" style="left:1203.0px;top:482.4px;width:88.0px">-0.687</div>
<div class="td" style="left:1292.0px;top:482.4px;width:69.0px">357.00</div>
<div class="td" style="left:1362.0px;top:482.4px;width:80.0px">149</div>
<div class="td" style="left:797.0px;top:499.4px;width:71.0px">26</div>
<div class="td" style="left:869.0px;top:499.4px;width:57.0px">0.9403</div>
<div class="td" style="left:927.0px;top:499.4px;width:67.0px">0.2430</div>
<div class="td" style="left:995.0px;top:499.4px;width:57.0px">1.8188</div>
<div class="td" style="left:1053.0px;top:499.4px;width:67.0px">7.8082</div>
<div class="td" style="left:1121.0px;top:499.4px;width:81.0px">0.6974</div>
<div class="td" style="left:1203.0px;top:499.4px;width:88.0px">-1.057</div>
<div class="td" style="left:1292.0px;top:499.4px;width:69.0px">359.00</div>
<div class="td" style="left:1362.0px;top:499.4px;width:80.0px">147</div>

<!-- scrollbar -->
<div class="abs" style="left:1443px;top:75px;width:17px;height:443px;background:#f0f0f0;"></div>
<div class="abs" style="left:1443px;top:92px;width:17px;height:178px;background:#cdcdcd;"></div>
<svg class="abs" style="left:1443px;top:75px" width="17" height="17" viewBox="0 0 17 17"><path d="M6.2 10.2L9.4 6.9L12.6 10.2" fill="none" stroke="#868686" stroke-width="1.3"/></svg>
<svg class="abs" style="left:1443px;top:500px" width="17" height="17" viewBox="0 0 17 17"><path d="M6.2 7.9L9.4 11.2L12.6 7.9" fill="none" stroke="#868686" stroke-width="1.3"/></svg>

<!-- action group -->
<div class="abs" style="left:1477px;top:41px;width:97px;height:164px;box-sizing:border-box;border:1px solid #bdbdbd;border-radius:4px;"></div>
<div class="abs" id="t6" style="left:1482.7px;top:33px;padding:0 4.4px 0 2.7px;background:#f8f8f8;font-size:12px;line-height:16px;">Action</div>
<div class="abs" id="t7" style="left:1486.5px;top:56px;font-size:11.75px;line-height:15px;white-space:nowrap;">Re-run Partion</div>
<div class="btn" style="top:76px;">OK</div>
<div class="btn" style="top:101px;">Cancel</div>
<div class="btn" style="top:136px;">Relaunch</div>
<div class="btn" style="top:171px;">Help</div>
</body>
</html>
